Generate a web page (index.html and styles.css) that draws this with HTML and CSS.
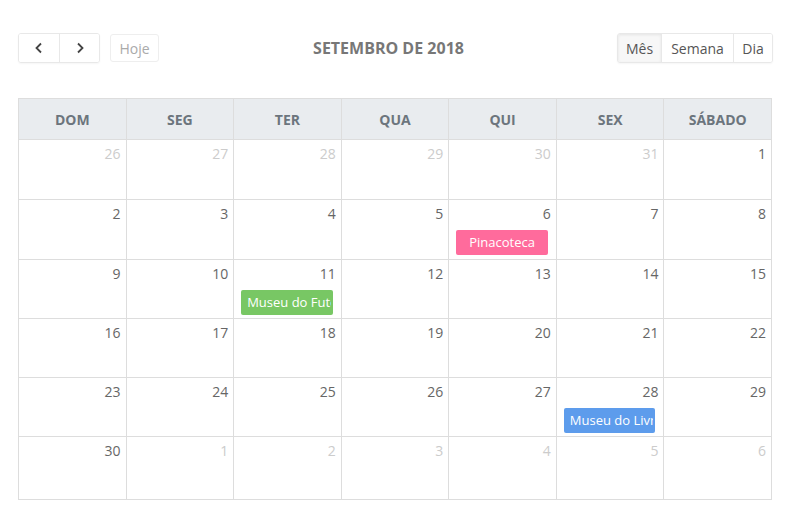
FILE: index.html
```html
<!DOCTYPE html>
<html lang="pt-BR">
<head>
<meta charset="utf-8">
<title>Calendário</title>
<link rel="stylesheet" href="styles.css">
</head>
<body>
<div class="cal">
  <div class="toolbar">
    <div class="left">
      <div class="group">
        <button class="btn icon" aria-label="Anterior"><svg width="10" height="12" viewBox="0 0 10 12"><path d="M7 1.5 L2.5 6 L7 10.5" fill="none" stroke="#444" stroke-width="1.8"/></svg></button>
        <button class="btn icon" aria-label="Próximo"><svg width="10" height="12" viewBox="0 0 10 12"><path d="M3 1.5 L7.5 6 L3 10.5" fill="none" stroke="#444" stroke-width="1.8"/></svg></button>
      </div>
      <button class="btn today">Hoje</button>
    </div>
    <h2 class="title">SETEMBRO DE 2018</h2>
    <div class="right">
      <div class="group">
        <button class="btn view v-mes active">Mês</button>
        <button class="btn view v-semana">Semana</button>
        <button class="btn view v-dia">Dia</button>
      </div>
    </div>
  </div>
  <div class="month">
    <div class="head">DOM</div><div class="head">SEG</div><div class="head">TER</div><div class="head">QUA</div><div class="head">QUI</div><div class="head">SEX</div><div class="head">SÁBADO</div>

    <div class="day other"><span class="num">26</span></div>
    <div class="day other"><span class="num">27</span></div>
    <div class="day other"><span class="num">28</span></div>
    <div class="day other"><span class="num">29</span></div>
    <div class="day other"><span class="num">30</span></div>
    <div class="day other"><span class="num">31</span></div>
    <div class="day"><span class="num">1</span></div>

    <div class="day"><span class="num">2</span></div>
    <div class="day"><span class="num">3</span></div>
    <div class="day"><span class="num">4</span></div>
    <div class="day"><span class="num">5</span></div>
    <div class="day"><span class="num">6</span><div class="event pink">Pinacoteca</div></div>
    <div class="day"><span class="num">7</span></div>
    <div class="day"><span class="num">8</span></div>

    <div class="day"><span class="num">9</span></div>
    <div class="day"><span class="num">10</span></div>
    <div class="day"><span class="num">11</span><div class="event green">Museu do Futebol</div></div>
    <div class="day"><span class="num">12</span></div>
    <div class="day"><span class="num">13</span></div>
    <div class="day"><span class="num">14</span></div>
    <div class="day"><span class="num">15</span></div>

    <div class="day"><span class="num">16</span></div>
    <div class="day"><span class="num">17</span></div>
    <div class="day"><span class="num">18</span></div>
    <div class="day"><span class="num">19</span></div>
    <div class="day"><span class="num">20</span></div>
    <div class="day"><span class="num">21</span></div>
    <div class="day"><span class="num">22</span></div>

    <div class="day"><span class="num">23</span></div>
    <div class="day"><span class="num">24</span></div>
    <div class="day"><span class="num">25</span></div>
    <div class="day"><span class="num">26</span></div>
    <div class="day"><span class="num">27</span></div>
    <div class="day"><span class="num">28</span><div class="event blue">Museu do Livro</div></div>
    <div class="day"><span class="num">29</span></div>

    <div class="day"><span class="num">30</span></div>
    <div class="day other"><span class="num">1</span></div>
    <div class="day other"><span class="num">2</span></div>
    <div class="day other"><span class="num">3</span></div>
    <div class="day other"><span class="num">4</span></div>
    <div class="day other"><span class="num">5</span></div>
    <div class="day other"><span class="num">6</span></div>
  </div>
</div>
</body>
</html>
```

FILE: styles.css
```css
* { box-sizing: border-box; }
html, body { margin: 0; padding: 0; background: #fff; }
body {
  font-family: "Open Sans", "Liberation Sans", sans-serif;
  color: #666;
}
.cal { padding: 34px 19px 0 18px; }

.toolbar {
  display: flex;
  align-items: center;
  justify-content: space-between;
  height: 28px;
  margin-bottom: 36px;
  margin-right: -1px;
}
.left, .right { display: flex; align-items: center; gap: 10px; width: 200px; }
.right { justify-content: flex-end; }
.group {
  display: flex;
  border: 1px solid #e8e8e8;
  border-radius: 3px;
  box-shadow: 0 1px 2px rgba(0,0,0,0.04);
  overflow: hidden;
}
.btn {
  font-family: inherit;
  font-size: 14px;
  color: #555;
  background: #fff;
  border: 0;
  height: 28px;
  padding: 0;
  display: flex;
  align-items: center;
  justify-content: center;
  cursor: pointer;
}
.group .btn + .btn { border-left: 1px solid #e8e8e8; }
.btn.icon { width: 40px; }
.btn.today {
  height: 28px;
  width: 49px;
  border: 1px solid #eee;
  border-radius: 3px;
  color: #aaa;
}
.v-mes { width: 43px; }
.v-semana { width: 72px; }
.v-dia { width: 39px; }
.btn.active { background: #f7f7f7; box-shadow: inset 0 1px 3px rgba(0,0,0,0.08); }

.title {
  margin: 0 14px 0 0;
  font-size: 16px;
  font-weight: 700;
  color: #777;
}

.month {
  display: grid;
  grid-template-columns: repeat(7, 1fr);
  grid-template-rows: 41px 60px 60px 59px 59px 59px 63px;
  border-top: 1px solid #ddd;
  border-left: 1px solid #ddd;
}
.head {
  background: #e9ecef;
  border-right: 1px solid #ddd;
  border-bottom: 1px solid #ddd;
  display: flex;
  align-items: center;
  justify-content: center;
  font-size: 14px;
  font-weight: 700;
  color: #6c757d;
}
.day {
  border-right: 1px solid #ddd;
  border-bottom: 1px solid #ddd;
  padding: 4px 5px 0 7px;
  display: flex;
  flex-direction: column;
  min-width: 0;
}
.num {
  text-align: right;
  font-size: 14px;
  line-height: 20px;
  color: #666;
}
.other .num { color: #ccc; }
.event {
  margin-top: 6px;
  margin-right: 3px;
  height: 25px;
  line-height: 25px;
  border-radius: 2px;
  border-right: 2px solid transparent;
  color: #fff;
  font-size: 13px;
  padding: 0 0 0 6px;
  white-space: nowrap;
  overflow: hidden;
  text-align: center;
}
.pink { background: #ff6b9c; padding-left: 0; border-left: 2px solid transparent; }
.green { background: #78c764; }
.blue { background: #5d9cec; }
```
